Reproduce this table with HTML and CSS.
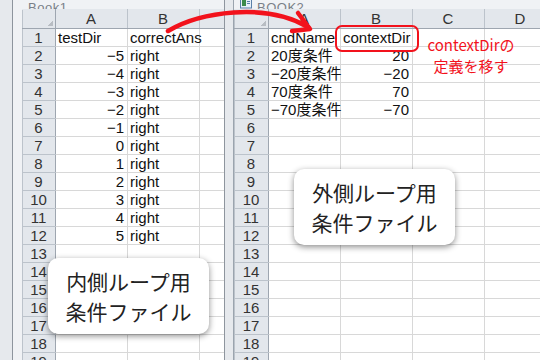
FILE: index.html
```html
<!DOCTYPE html>
<html lang="ja">
<head>
    <meta charset="UTF-8">
    <title>条件ファイル</title>
    <link rel="stylesheet" href="styles.css">
</head>
<body>
    <div class="workspace">
        <div class="window window-left">
            <div class="title-bar"><span class="title">Book1</span></div>
            <table class="sheet">
                <colgroup><col class="col-head"><col class="col"><col class="col"><col class="col"></colgroup>
                <tr class="col-labels"><th class="corner"></th><th>A</th><th>B</th><th></th></tr>
                <tr><th>1</th><td>testDir</td><td>correctAns</td><td></td></tr>
                <tr><th>2</th><td class="num">−5</td><td>right</td><td></td></tr>
                <tr><th>3</th><td class="num">−4</td><td>right</td><td></td></tr>
                <tr><th>4</th><td class="num">−3</td><td>right</td><td></td></tr>
                <tr><th>5</th><td class="num">−2</td><td>right</td><td></td></tr>
                <tr><th>6</th><td class="num">−1</td><td>right</td><td></td></tr>
                <tr><th>7</th><td class="num">0</td><td>right</td><td></td></tr>
                <tr><th>8</th><td class="num">1</td><td>right</td><td></td></tr>
                <tr><th>9</th><td class="num">2</td><td>right</td><td></td></tr>
                <tr><th>10</th><td class="num">3</td><td>right</td><td></td></tr>
                <tr><th>11</th><td class="num">4</td><td>right</td><td></td></tr>
                <tr><th>12</th><td class="num">5</td><td>right</td><td></td></tr>
                <tr><th>13</th><td></td><td></td><td></td></tr>
                <tr><th>14</th><td></td><td></td><td></td></tr>
                <tr><th>15</th><td></td><td></td><td></td></tr>
                <tr><th>16</th><td></td><td></td><td></td></tr>
                <tr><th>17</th><td></td><td></td><td></td></tr>
                <tr><th>18</th><td></td><td></td><td></td></tr>
                <tr><th>19</th><td></td><td></td><td></td></tr>
            </table>
        </div>

        <div class="window window-right">
            <div class="title-bar">
                <svg class="book-icon" width="12" height="9" viewBox="0 0 12 9">
                    <rect x="0.5" y="-3" width="11" height="11" fill="#e8f0f8" stroke="#5a7fa8"/>
                    <rect x="2" y="0" width="4" height="6" fill="#3d8a4a"/>
                    <rect x="7" y="1" width="3" height="1" fill="#5a7fa8"/>
                    <rect x="7" y="3" width="3" height="1" fill="#5a7fa8"/>
                </svg>
                <span class="title">BOOK2</span>
            </div>
            <table class="sheet">
                <colgroup><col class="col-head"><col class="col"><col class="col"><col class="col"><col class="col"></colgroup>
                <tr class="col-labels"><th class="corner"></th><th>A</th><th>B</th><th>C</th><th>D</th></tr>
                <tr><th>1</th><td>cndName</td><td>contextDir</td><td></td><td></td></tr>
                <tr><th>2</th><td>20度条件</td><td class="num">20</td><td></td><td></td></tr>
                <tr><th>3</th><td>−20度条件</td><td class="num">−20</td><td></td><td></td></tr>
                <tr><th>4</th><td>70度条件</td><td class="num">70</td><td></td><td></td></tr>
                <tr><th>5</th><td>−70度条件</td><td class="num">−70</td><td></td><td></td></tr>
                <tr><th>6</th><td></td><td></td><td></td><td></td></tr>
                <tr><th>7</th><td></td><td></td><td></td><td></td></tr>
                <tr><th>8</th><td></td><td></td><td></td><td></td></tr>
                <tr><th>9</th><td></td><td></td><td></td><td></td></tr>
                <tr><th>10</th><td></td><td></td><td></td><td></td></tr>
                <tr><th>11</th><td></td><td></td><td></td><td></td></tr>
                <tr><th>12</th><td></td><td></td><td></td><td></td></tr>
                <tr><th>13</th><td></td><td></td><td></td><td></td></tr>
                <tr><th>14</th><td></td><td></td><td></td><td></td></tr>
                <tr><th>15</th><td></td><td></td><td></td><td></td></tr>
                <tr><th>16</th><td></td><td></td><td></td><td></td></tr>
                <tr><th>17</th><td></td><td></td><td></td><td></td></tr>
                <tr><th>18</th><td></td><td></td><td></td><td></td></tr>
                <tr><th>19</th><td></td><td></td><td></td><td></td></tr>
            </table>
        </div>

        <!-- annotations laid over the two sheets -->
        <svg class="arrow" width="540" height="60" viewBox="0 0 540 60">
            <path d="M168 31 C200 12 265 2 308 27" />
            <path d="M298 13 L310 29 L292 31" />
        </svg>
        <div class="highlight"></div>
        <div class="note">contextDirの<br>定義を移す</div>
        <div class="callout callout-inner">内側ループ用<br>条件ファイル</div>
        <div class="callout callout-outer">外側ループ用<br>条件ファイル</div>
    </div>
</body>
</html>
```

FILE: styles.css
```css
* {
    margin: 0;
    padding: 0;
    box-sizing: border-box;
}

body {
    width: 540px;
    height: 360px;
    overflow: hidden;
    background: #e6e9ed;
    font-family: "Liberation Sans", "Noto Sans CJK JP", sans-serif;
}

.workspace {
    position: relative;
    display: flex;
    gap: 8px;
    height: 360px;
    padding-left: 12px;
}

.window {
    background: #f0f2f5;
    overflow: hidden;
    height: 360px;
}

.window-left {
    flex: none;
    width: 213px;
    padding-left: 9px;
    border-left: 1px solid #8e959e;
    border-right: 1px solid #8e959e;
}

.window-right {
    flex: 1;
    border-left: 1px solid #9ba4ae;
}

.title-bar {
    height: 9px;
    overflow: hidden;
    display: flex;
    align-items: flex-end;
    gap: 5px;
    padding-left: 6px;
}

.title {
    font-size: 13px;
    line-height: 13px;
    margin-bottom: -5px;
    color: #7a8088;
    letter-spacing: 0.5px;
}

.book-icon {
    flex: none;
}

.sheet {
    border-collapse: collapse;
    table-layout: fixed;
    font-size: 15px;
    color: #111;
    background: #fff;
}

.window-left .sheet {
    width: 249px;
}

.window-right .sheet {
    width: 322px;
}

.col-head {
    width: 34px;
}

.col {
    width: 72px;
}

.window-left .col-head {
    width: 33px;
}

.sheet td,
.sheet th {
    height: 18px;
    padding: 0 3px 0 2px;
    line-height: 16px;
    white-space: nowrap;
    border: 1px solid #d8d8d8;
    font-weight: normal;
    text-align: left;
}

.sheet th {
    background: #e3e7ec;
    border-color: #bcc3cb;
    color: #333;
    text-align: center;
    border-right-color: #9ea6b0;
}

.sheet .col-labels th {
    height: 19px;
    border-bottom-color: #9ea6b0;
    border-top-color: #e3e7ec;
    border-right-color: #bcc3cb;
}

.sheet .col-labels .corner {
    border-right-color: #9ea6b0;
    background: #e3e7ec linear-gradient(135deg, transparent 71%, #b8bdc3 71%) no-repeat right 2px bottom 2px / 10px 10px;
}

.sheet td.num {
    text-align: right;
}

.arrow {
    position: absolute;
    left: 0;
    top: 0;
}

.arrow path {
    fill: none;
    stroke: #f2121c;
    stroke-width: 4.5;
    stroke-linecap: round;
    stroke-linejoin: round;
}

.highlight {
    position: absolute;
    left: 335px;
    top: 25px;
    width: 84px;
    height: 27px;
    border: 2px solid #f2121c;
    border-radius: 7px;
}

.note {
    position: absolute;
    left: 424px;
    top: 34px;
    width: 94px;
    text-align: center;
    color: #f2121c;
    font-family: "Noto Sans CJK JP", sans-serif;
    font-size: 15px;
    line-height: 21px;
}

.callout {
    position: absolute;
    width: 161px;
    height: 76px;
    background: #fff;
    border-radius: 10px;
    box-shadow: 0 2px 6px rgba(0, 0, 0, 0.45);
    color: #222;
    font-family: "Noto Sans CJK JP", sans-serif;
    font-size: 21px;
    line-height: 30px;
    text-align: center;
    padding-top: 8px;
}

.callout-inner {
    left: 48px;
    top: 258px;
}

.callout-outer {
    left: 294px;
    top: 169px;
}
```
